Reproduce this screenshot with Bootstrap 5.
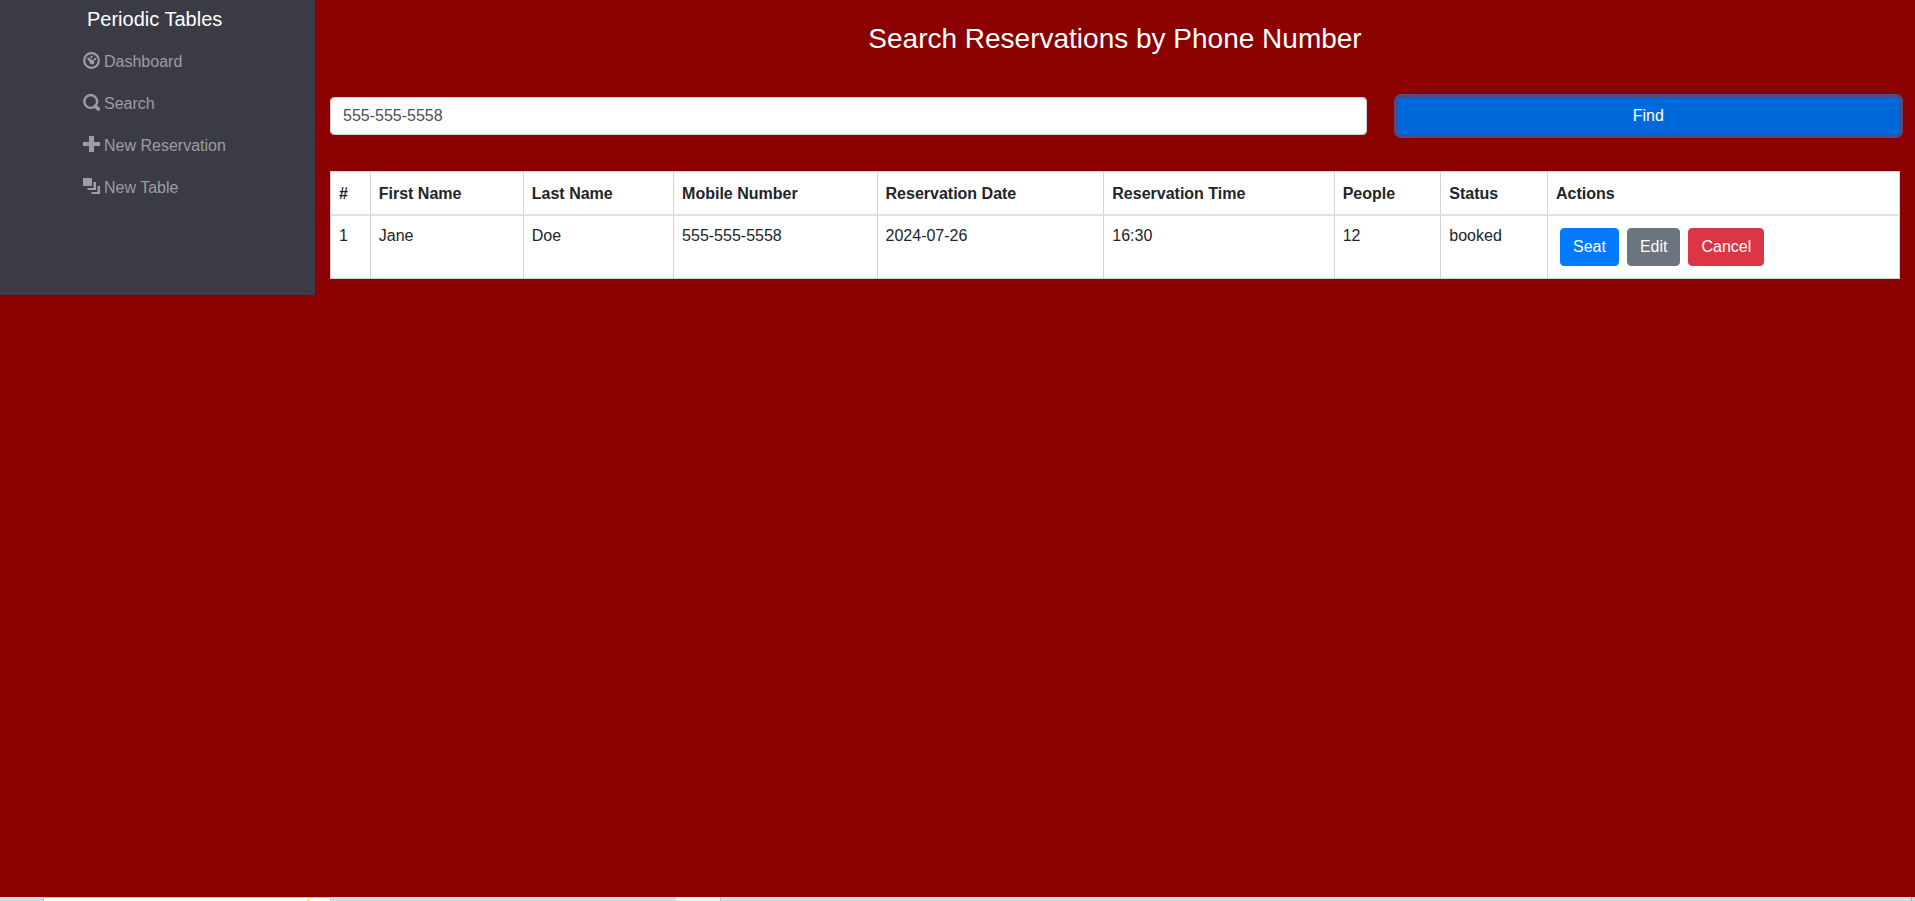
<!DOCTYPE html>
<html lang="en">
<head>
<meta charset="utf-8">
<meta name="viewport" content="width=device-width, initial-scale=1">
<title>Periodic Tables</title>
<link href="https://cdn.jsdelivr.net/npm/bootstrap@5.3.0/dist/css/bootstrap.min.css" rel="stylesheet">
<style>
  body { font-family: "Liberation Sans", Arial, sans-serif; background: #8b0000; color: #212529; }
  .side-bar { flex: 0 0 315px; height: 295px; background: #3b3b45; }
  .side-bar .brand { font-size: 20px; line-height: 30px; padding: 4px 0 3px 4px; }
  .side-menu { width: 232px; }
  .side-menu .nav-link { color: #9d9da2; padding: 9px 0; line-height: 24px; gap: 4px; }
  .side-menu .nav-link:hover { color: #fff; }
  .side-menu svg { width: 17px; height: 17px; margin-bottom: 3px; }
  .main-area { min-width: 0; padding: 0 15px; }
  .main-area .row { --bs-gutter-x: 30px; }
  .main-area h1 { font-size: 28px; line-height: 34px; margin: 22px 0 41px; }
  .form-control { color: #495057; border-color: #ced4da; border-radius: 4px; }
  .btn { border-radius: 4px; }
  .btn-primary { --bs-btn-bg: #007bff; --bs-btn-border-color: #007bff; --bs-btn-hover-bg: #0069d9; --bs-btn-hover-border-color: #0062cc; }
  .btn-find, .btn-find:focus { background: #0069d9; border-color: #0062cc; box-shadow: 0 0 0 3px rgba(38, 143, 255, .5); }
  .table { --bs-table-bg: #fff; border-color: #d0d3d6; margin: 36px 0 0; }
  .table > thead th { padding: 10px 8px 8px; border-bottom: 2px solid #dee2e6; }
  .taskbar { height: 4px; background: #d5daea; }
  .taskbar .search-box { width: 288px; margin-left: 43px; background: #fff; border: solid #c8c3c9; border-width: 1px 1px 0; }
  .taskbar .active-item { width: 45px; margin-left: 345px; background: #f0f0f8; border-right: 1px solid #b9bfd0; }
  .taskbar .spark { width: 3px; height: 1px; margin: 2px 20px 0 auto; background: #ffb766; }
  .taskbar .peek { width: 4px; border-left: 1px solid #aeb4c4; }
</style>
</head>
<body>
<div class="d-flex flex-column min-vh-100">
  <div class="d-flex flex-grow-1 align-items-start">
    <nav class="side-bar" aria-label="Main">
      <div class="side-menu ms-auto">
        <a class="brand d-block text-white text-decoration-none" href="#">Periodic Tables</a>
        <ul class="nav flex-column mt-1">
          <li class="nav-item"><a class="nav-link d-flex align-items-center" href="#">
            <svg viewBox="0 0 17 17" fill="currentColor" aria-hidden="true"><circle cx="8.500" cy="8.500" r="7.300" fill="none" stroke="currentColor" stroke-width="2.200"/><circle cx="8.500" cy="4.900" r="1.200"/><circle cx="12" cy="7" r="1.200"/><path d="M3.900 6.200 5.300 5.200 8.500 7.600a2.400 2.400 0 1 1-2 2.400z"/></svg>
            Dashboard</a></li>
          <li class="nav-item"><a class="nav-link d-flex align-items-center" href="#">
            <svg viewBox="0 0 17 17" fill="none" stroke="currentColor" aria-hidden="true"><circle cx="7.700" cy="7.500" r="6.400" stroke-width="2.400"/><path d="m12.300 12.200 3 2.800" stroke-width="3.600" stroke-linecap="round"/></svg>
            Search</a></li>
          <li class="nav-item"><a class="nav-link d-flex align-items-center" href="#">
            <svg viewBox="0 0 17 17" fill="currentColor" aria-hidden="true"><path d="M6 0h5v6h6v4h-6v6H6v-6H0V6h6z"/></svg>
            New Reservation</a></li>
          <li class="nav-item"><a class="nav-link d-flex align-items-center" href="#">
            <svg viewBox="0 0 17 17" fill="currentColor" aria-hidden="true"><path d="M0 0h9v8H0zM10.500 4H13v8H4.500V10h6zM14.500 8H17v8H8.500V14h6z"/></svg>
            New Table</a></li>
        </ul>
      </div>
    </nav>
    <main class="main-area flex-grow-1">
      <h1 class="text-center text-white fw-normal">Search Reservations by Phone Number</h1>
      <form class="row" onsubmit="return false">
        <div class="col-8"><input class="form-control" type="text" name="mobile_number" aria-label="Mobile number" value="555-555-5558"></div>
        <div class="col-4"><button class="btn btn-primary btn-find w-100" type="submit">Find</button></div>
      </form>
      <table class="table table-bordered">
        <thead>
          <tr><th scope="col">#</th><th scope="col">First Name</th><th scope="col">Last Name</th><th scope="col">Mobile Number</th><th scope="col">Reservation Date</th><th scope="col">Reservation Time</th><th scope="col">People</th><th scope="col">Status</th><th scope="col">Actions</th></tr>
        </thead>
        <tbody>
          <tr><td>1</td><td>Jane</td><td>Doe</td><td>555-555-5558</td><td>2024-07-26</td><td>16:30</td><td>12</td><td>booked</td>
            <td><div class="d-flex gap-2 p-1"><button class="btn btn-primary" type="button">Seat</button><button class="btn btn-secondary" type="button">Edit</button><button class="btn btn-danger" type="button">Cancel</button></div></td></tr>
        </tbody>
      </table>
    </main>
  </div>
  <div class="taskbar d-flex" aria-hidden="true">
    <div class="search-box"><div class="spark"></div></div>
    <div class="active-item"></div>
    <div class="peek ms-auto"></div>
  </div>
</div>
<script src="https://cdn.jsdelivr.net/npm/bootstrap@5.3.0/dist/js/bootstrap.bundle.min.js"></script>
</body>
</html>
